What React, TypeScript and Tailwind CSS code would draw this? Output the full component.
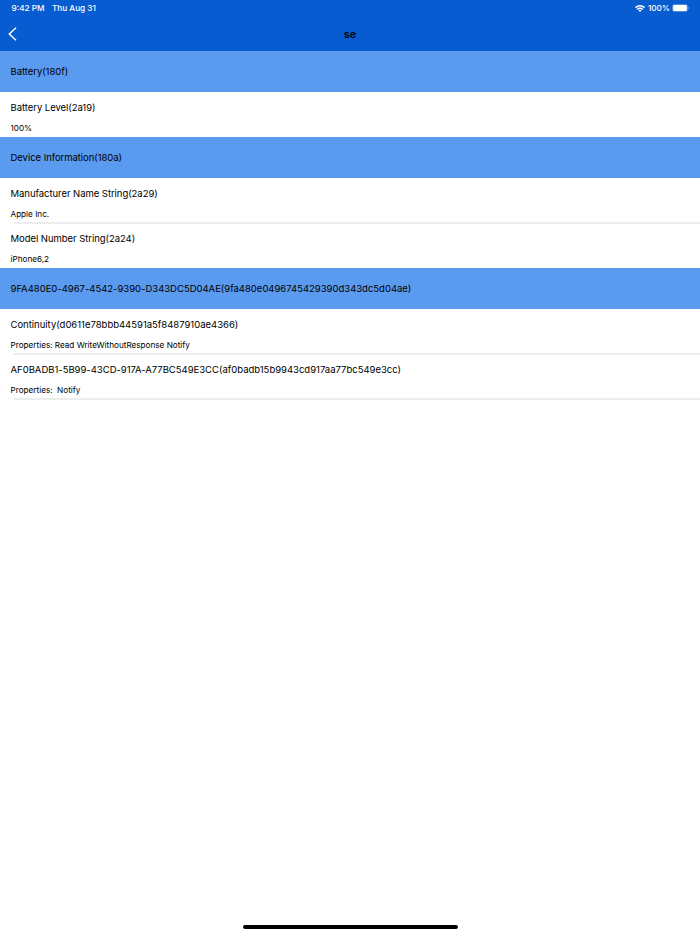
type Characteristic = {
  title: string;
  value: string;
};

type Service = {
  title: string;
  characteristics: Characteristic[];
};

const services: Service[] = [
  {
    title: "Battery(180f)",
    characteristics: [{ title: "Battery Level(2a19)", value: "100%" }],
  },
  {
    title: "Device Information(180a)",
    characteristics: [
      { title: "Manufacturer Name String(2a29)", value: "Apple Inc." },
      { title: "Model Number String(2a24)", value: "iPhone6,2" },
    ],
  },
  {
    title: "9FA480E0-4967-4542-9390-D343DC5D04AE(9fa480e0496745429390d343dc5d04ae)",
    characteristics: [
      {
        title: "Continuity(d0611e78bbb44591a5f8487910ae4366)",
        value: "Properties: Read WriteWithoutResponse Notify",
      },
      {
        title: "AF0BADB1-5B99-43CD-917A-A77BC549E3CC(af0badb15b9943cd917aa77bc549e3cc)",
        value: "Properties:  Notify",
      },
    ],
  },
];

const tracking = (title: string) => (title.length > 40 ? "tracking-[-0.01px]" : "tracking-[-0.05px]");

function StatusBar() {
  return (
    <div className="flex h-[17px] items-center justify-between pr-[11px] pl-[11.5px] text-[8.2px] font-medium text-white">
      <div className="flex gap-[7.5px]">
        <span>9:42 PM</span>
        <span>Thu Aug 31</span>
      </div>
      <div className="flex items-center gap-[3px]">
        <svg className="h-[7px] w-[10px]" viewBox="0 0 20 14" fill="none" stroke="white" strokeWidth="3">
          <path d="M1 5.2a13 13 0 0 1 18 0M4.3 9a8.2 8.2 0 0 1 11.4 0" />
          <path d="M7 11a4.4 4.4 0 0 1 6 0l-3 3z" fill="white" stroke="none" />
        </svg>
        <span>100%</span>
        <svg className="-ml-px h-[8px] w-[17px]" viewBox="0 0 17 8">
          <rect x=".4" y=".4" width="15.2" height="7.2" rx="2" fill="none" stroke="white" strokeOpacity=".45" strokeWidth=".7" />
          <rect x="1.1" y="1.1" width="13.8" height="5.8" rx="1.2" fill="white" />
          <path d="M16.1 2.8q.8.3.8 1.2t-.8 1.2z" fill="white" fillOpacity=".5" />
        </svg>
      </div>
    </div>
  );
}

function NavBar() {
  return (
    <div className="grid h-[34px] grid-cols-3 items-center px-2">
      <button aria-label="Back" className="w-[9px]">
        <svg className="h-[14px] w-[9px]" viewBox="0 0 9 14" fill="none" stroke="white" strokeWidth="1.4">
          <path d="M8 .8 1.3 7 8 13.2" />
        </svg>
      </button>
      <h1 className="text-center text-[11px] font-semibold">se</h1>
    </div>
  );
}

function CharacteristicRow({ title, value, divider }: Characteristic & { divider: boolean }) {
  return (
    <li className="flex h-[45px] flex-col pt-[9px]">
      <p className={`pl-[10.5px] text-[9.5px] leading-[14px] ${tracking(title)}`}>{title}</p>
      <p className="mt-[7px] pl-[10.5px] text-[8.17px] leading-[12px] whitespace-pre">{value}</p>
      {divider && <hr className="mt-[2px] ml-[14px] h-[2px] shrink-0 border-0 bg-[#ededee]" />}
    </li>
  );
}

export default function App() {
  return (
    <div className="flex h-[934px] flex-col bg-white font-[Inter,sans-serif] text-black">
      <header className="h-[51px] bg-[#075cd2]">
        <StatusBar />
        <NavBar />
      </header>
      <main className="flex-1">
        {services.map((service, index) => (
          <section key={service.title}>
            <h2
              className={`flex h-[41px] items-center bg-[#5a9aef] pt-px pl-[10.5px] text-[9.5px] ${tracking(service.title)}`}
            >
              {service.title}
            </h2>
            <ul>
              {service.characteristics.map((item, row) => (
                <CharacteristicRow
                  key={item.title}
                  {...item}
                  divider={row < service.characteristics.length - 1 || index === services.length - 1}
                />
              ))}
            </ul>
          </section>
        ))}
      </main>
      <div className="mx-auto mb-[5px] h-1 w-[215px] rounded-full bg-black" />
    </div>
  );
}
